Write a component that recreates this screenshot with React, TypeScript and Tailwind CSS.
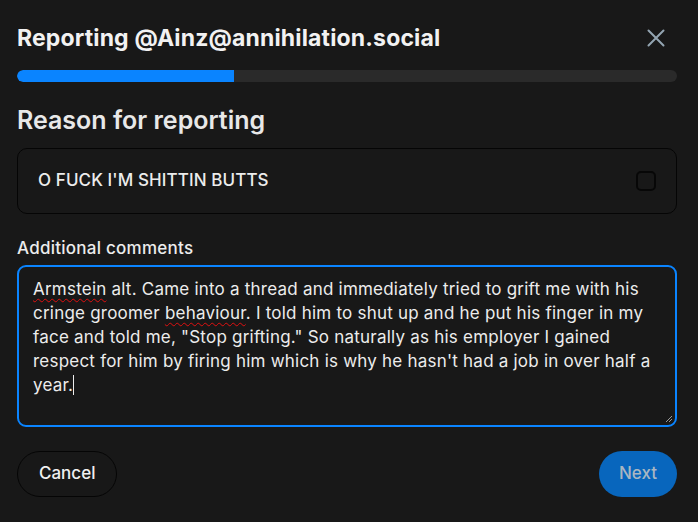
import React from "react";

export default function App() {
  const font = { fontFamily: "Inter, 'Noto Sans', sans-serif" };
  const squiggle = "underline decoration-wavy decoration-[#e01010] decoration-1 underline-offset-[3px]";
  return (
    <div className="w-[698px] h-[522px] bg-[#181818] text-[#ececec] overflow-hidden" style={font}>
      <div className="pl-[17px] pr-[21px] pt-[24px] flex flex-col">
        <div className="flex items-center justify-between h-[28px]">
          <h1 className="text-[23px] font-bold tracking-[0.15px] text-[#f2f2f2]">Reporting @Ainz@annihilation.social</h1>
          <svg width="18" height="18" viewBox="0 0 18 18" className="mr-[12px]">
            <path d="M1.5 1.5 L16.5 16.5 M16.5 1.5 L1.5 16.5" stroke="#93a4b1" strokeWidth="2" strokeLinecap="round" />
          </svg>
        </div>
        <div className="mt-[18px] h-[12px] rounded-full bg-[#2a2a2a] overflow-hidden">
          <div className="h-full w-[217px] bg-[#0a84ff] rounded-l-full" />
        </div>
        <h2 className="mt-[23px] text-[25px] font-semibold leading-[30px] text-[#e8e8e8]">Reason for reporting</h2>
        <div className="mt-[13px] h-[66px] rounded-[10px] border border-[#050505] flex items-center justify-between pl-[20px] pr-[20px]">
          <span className="text-[17px] font-medium tracking-[0.1px] text-[#ececec]">O FUCK I'M SHITTIN BUTTS</span>
          <div className="w-[20px] h-[20px] rounded-[5px] border-2 border-[#070707]" />
        </div>
        <div className="mt-[24px] text-[17px] font-medium tracking-[0.25px] leading-[20px] text-[#ececec]">Additional comments</div>
        <div className="mt-[7px] relative h-[162px] rounded-[9px] border-2 border-[#0a84ff] px-[14px] pt-[10px]">
          <p className="text-[17px] leading-[24px] tracking-[0.22px] text-[#ececec]">
            <span className={squiggle}>Armstein</span> alt. Came into a thread and immediately tried to grift me with his cringe groomer <span className={squiggle}>behaviour</span>. I told him to shut up and he put his finger in my face and told me, "Stop grifting." So naturally as his employer I gained respect for him by firing him which is why he hasn't had a job in over half a year.<span className="inline-block w-px h-[20px] bg-[#ececec] align-[-4px]" />
          </p>
          <svg width="8" height="8" viewBox="0 0 8 8" className="absolute right-[2px] bottom-[2px]">
            <path d="M1 7 L7 1 M4 7 L7 4" stroke="#9a9a9a" strokeWidth="1" />
          </svg>
        </div>
        <div className="mt-[24px] flex items-center justify-between">
          <button className="h-[46px] px-[21px] rounded-full border border-[#050505] text-[17px] font-medium text-[#f0f0f0]">Cancel</button>
          <button className="h-[46px] px-[20px] rounded-full bg-[#0866bd] text-[17px] font-medium text-[#a9b6c2]">Next</button>
        </div>
      </div>
    </div>
  );
}
